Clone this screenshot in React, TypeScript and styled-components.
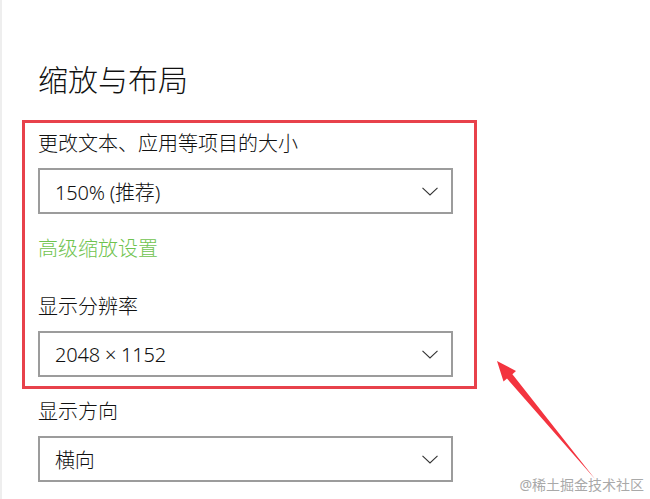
import React from 'react';
import styled, { createGlobalStyle } from 'styled-components';

const GlobalStyle = createGlobalStyle`
    html, body {
        margin: 0;
        padding: 0;
        background: #ffffff;
    }
    body {
        font-family: "Noto Sans", "Noto Sans CJK SC", sans-serif;
        color: #000000;
    }
`;

const Page = styled.div`
    position: relative;
    width: 650px;
    height: 499px;
    overflow: hidden;
    box-sizing: border-box;
    border-left: 2px solid #eeeeee;
    padding-left: 20px;
`;

const Title = styled.h1`
    margin: 60px 0 20px 16px;
    font-size: 30px;
    line-height: 40px;
    font-weight: 300;
    color: #111111;
`;

const Highlight = styled.section`
    width: 455px;
    box-sizing: border-box;
    border: 3px solid #e8414b;
    padding: 7px 21px 9px 13px;
`;

const Plain = styled.section`
    width: 455px;
    box-sizing: border-box;
    padding: 9px 21px 0 16px;
`;

const Label = styled.div<{ $gap?: number }>`
    margin-top: ${props => props.$gap || 0}px;
    font-size: 20px;
    line-height: 28px;
    height: 28px;
    font-weight: 300;
    color: #111111;
`;

const SettingLink = styled.a`
    display: block;
    margin-top: 21px;
    font-size: 20px;
    line-height: 28px;
    height: 28px;
    font-weight: 300;
    color: #6fc34e;
    text-decoration: none;
    cursor: pointer;
`;

const Select = styled.div`
    margin-top: 10px;
    width: 415px;
    height: 46px;
    box-sizing: border-box;
    border: 2px solid #9c9c9c;
    display: flex;
    align-items: center;
    justify-content: space-between;
    padding: 0 13px 0 15px;
    font-size: 20px;
    font-weight: 300;
    letter-spacing: -0.2px;
    color: #111111;
    background: #ffffff;
`;

const Chevron = () => (
    <svg width="16" height="9" viewBox="0 0 16 9" fill="none">
        <path d="M0.5 0.8 L8 8 L15.5 0.8" stroke="#333333" strokeWidth="1.1" />
    </svg>
);

const Arrow = styled.svg`
    position: absolute;
    left: 0;
    top: 0;
    pointer-events: none;
`;

const Watermark = styled.span`
    position: absolute;
    right: 6px;
    bottom: 5px;
    font-size: 14px;
    line-height: 18px;
    color: #a9a9a9;
    text-shadow: 0 0 1px #ffffff;
`;

const Dropdown = ({ value }: { value: string }) => (
    <Select>
        <span>{value}</span>
        <Chevron />
    </Select>
);

const App = () => (
    <>
        <GlobalStyle />
        <Page>
            <Title>缩放与布局</Title>
            <Highlight>
                <Label>更改文本、应用等项目的大小</Label>
                <Dropdown value="150% (推荐)" />
                <SettingLink>高级缩放设置</SettingLink>
                <Label $gap={30}>显示分辨率</Label>
                <Dropdown value="2048 × 1152" />
            </Highlight>
            <Plain>
                <Label>显示方向</Label>
                <Dropdown value="横向" />
            </Plain>
            <Arrow width="650" height="499" viewBox="0 0 650 499">
                <polygon
                    points="495,361 514,371 510.4,374.2 593,479 505,378.6 501.5,381.5"
                    fill="#f3343f"
                />
            </Arrow>
            <Watermark>@稀土掘金技术社区</Watermark>
        </Page>
    </>
);

export default App;
